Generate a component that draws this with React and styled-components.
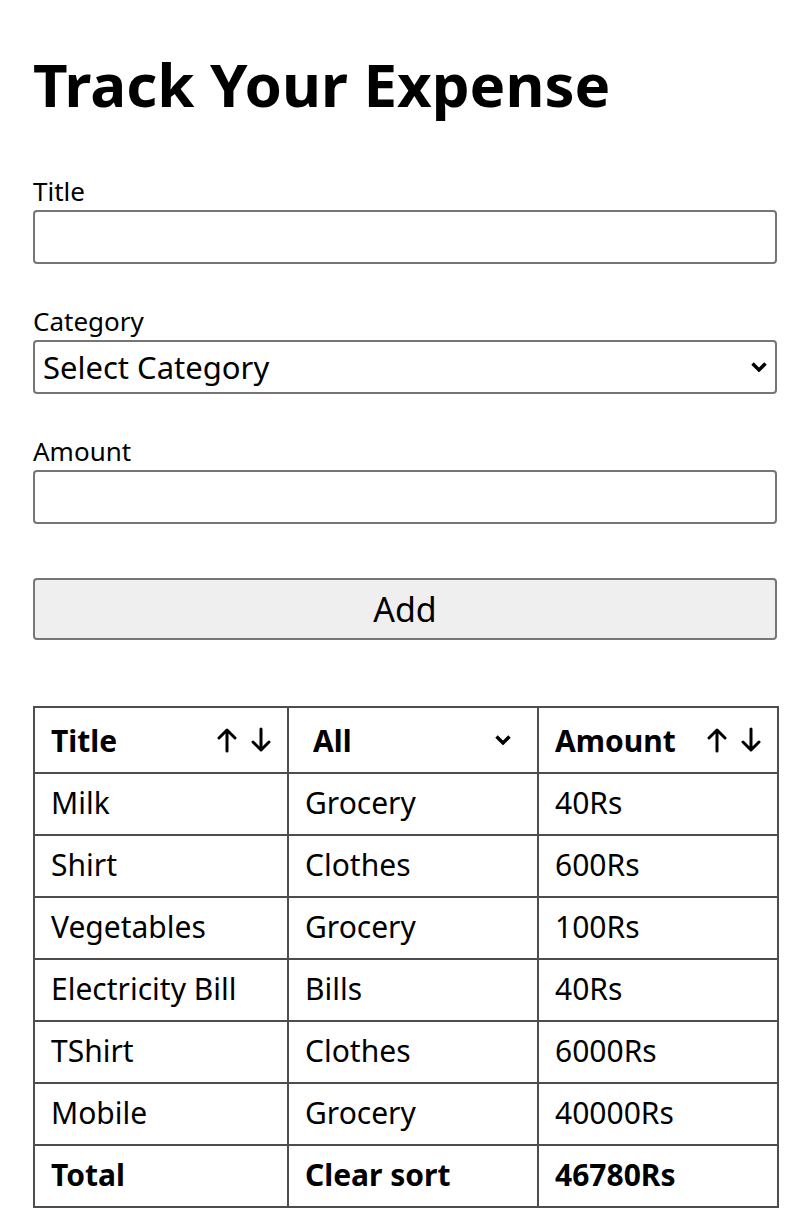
import React from "react"
import styled, { createGlobalStyle } from "styled-components"

const expenses = [
  { title: "Milk", category: "Grocery", amount: 40 },
  { title: "Shirt", category: "Clothes", amount: 600 },
  { title: "Vegetables", category: "Grocery", amount: 100 },
  { title: "Electricity Bill", category: "Bills", amount: 40 },
  { title: "TShirt", category: "Clothes", amount: 6000 },
  { title: "Mobile", category: "Grocery", amount: 40000 },
]

const ArrowUp = () => (
  <svg width="20" height="26" viewBox="0 0 20 26" fill="none" stroke="#000" strokeWidth="3" strokeLinecap="round" strokeLinejoin="round">
    <path d="M10 24V3M2 11l8-8 8 8" />
  </svg>
)

const ArrowDown = () => (
  <svg width="20" height="26" viewBox="0 0 20 26" fill="none" stroke="#000" strokeWidth="3" strokeLinecap="round" strokeLinejoin="round">
    <path d="M10 2v21M2 15l8 8 8-8" />
  </svg>
)

const Chevron = () => (
  <svg width="16" height="10" viewBox="0 0 16 10" fill="none" stroke="#000" strokeWidth="3.4" strokeLinejoin="miter">
    <path d="M1.5 1.5l6.5 6.5 6.5-6.5" />
  </svg>
)

const App = () => {
  const total = expenses.reduce((sum, e) => sum + e.amount, 0)

  return (
    <Page>
      <GlobalStyle />
      <Heading>Track Your Expense</Heading>
      <Form onSubmit={(e) => e.preventDefault()}>
        <Field>
          <Label htmlFor="title">Title</Label>
          <Input id="title" />
        </Field>
        <Field>
          <Label htmlFor="category">Category</Label>
          <SelectWrap>
            <Select id="category" defaultValue="">
              <option value="">Select Category</option>
              <option>Grocery</option>
              <option>Clothes</option>
              <option>Bills</option>
            </Select>
            <ChevronSlot $right={10}>
              <Chevron />
            </ChevronSlot>
          </SelectWrap>
        </Field>
        <Field>
          <Label htmlFor="amount">Amount</Label>
          <Input id="amount" />
        </Field>
        <AddButton>Add</AddButton>
      </Form>

      <Table>
        <colgroup>
          <col style={{ width: 254 }} />
          <col style={{ width: 250 }} />
          <col style={{ width: 240 }} />
        </colgroup>
        <thead>
          <tr>
            <Th>
              <HeadInner>
                Title
                <Arrows>
                  <ArrowUp />
                  <ArrowDown />
                </Arrows>
              </HeadInner>
            </Th>
            <Th>
              <SelectWrap>
                <FilterSelect defaultValue="All">
                  <option>All</option>
                  <option>Grocery</option>
                  <option>Clothes</option>
                  <option>Bills</option>
                </FilterSelect>
                <ChevronSlot $right={10}>
                  <Chevron />
                </ChevronSlot>
              </SelectWrap>
            </Th>
            <Th>
              <HeadInner>
                Amount
                <Arrows>
                  <ArrowUp />
                  <ArrowDown />
                </Arrows>
              </HeadInner>
            </Th>
          </tr>
        </thead>
        <tbody>
          {expenses.map((e) => (
            <tr key={e.title}>
              <Td>{e.title}</Td>
              <Td>{e.category}</Td>
              <Td>{e.amount}Rs</Td>
            </tr>
          ))}
          <tr>
            <Td $bold>Total</Td>
            <Td $bold>Clear sort</Td>
            <Td $bold>{total}Rs</Td>
          </tr>
        </tbody>
      </Table>
    </Page>
  )
}

const GlobalStyle = createGlobalStyle`
  body {
    margin: 0;
    background: #fff;
    color: #000;
    font-family: "Noto Sans", Lato, sans-serif;
  }
`

const Page = styled.div`
  padding: 0 33px;
`

const Heading = styled.h1`
  margin: 0;
  padding-top: 42px;
  font-size: 60px;
  font-weight: 700;
  line-height: 84px;
`

const Form = styled.form`
  display: flex;
  flex-direction: column;
  margin-top: 46px;
`

const Field = styled.div`
  display: flex;
  flex-direction: column;
  margin-bottom: 38px;
`

const Label = styled.label`
  font-size: 26px;
  line-height: 38px;
`

const Input = styled.input`
  box-sizing: border-box;
  height: 54px;
  width: 100%;
  border: 2px solid #767676;
  border-radius: 4px;
  font-family: inherit;
  font-size: 28px;
`

const SelectWrap = styled.div`
  position: relative;
  display: flex;
`

const ChevronSlot = styled.span`
  position: absolute;
  right: ${(p) => p.$right}px;
  top: 50%;
  transform: translateY(-50%);
  display: flex;
  pointer-events: none;
`

const Select = styled.select`
  appearance: none;
  box-sizing: border-box;
  height: 54px;
  width: 100%;
  border: 2px solid #767676;
  border-radius: 4px;
  background: #fff;
  color: #000;
  font-family: inherit;
  font-size: 31px;
  padding-left: 8px;
`

const AddButton = styled.button`
  box-sizing: border-box;
  height: 62px;
  width: 100%;
  margin-top: 16px;
  border: 2px solid #767676;
  border-radius: 4px;
  background: #efefef;
  font-family: inherit;
  font-size: 34px;
  color: #000;
`

const Table = styled.table`
  margin-top: 66px;
  width: 745px;
  border-collapse: collapse;
  border: 2px solid #4d4d4d;
  table-layout: fixed;
`

const Th = styled.th`
  height: 64px;
  border: 2px solid #4d4d4d;
  padding: 0 16px;
  font-size: 30px;
  font-weight: 700;
  text-align: left;
`

const HeadInner = styled.div`
  display: flex;
  align-items: center;
  justify-content: space-between;
`

const Arrows = styled.span`
  display: flex;
  gap: 14px;
  align-items: center;
`

const FilterSelect = styled.select`
  appearance: none;
  width: 100%;
  border: none;
  background: transparent;
  font-family: inherit;
  font-size: 30px;
  font-weight: 700;
  color: #000;
  padding: 0 0 0 8px;
`

const Td = styled.td`
  box-sizing: border-box;
  height: 62px;
  border: 2px solid #4d4d4d;
  padding: 0 16px 3px;
  font-size: 30px;
  font-weight: ${(p) => (p.$bold ? 700 : 400)};
`

export default App
